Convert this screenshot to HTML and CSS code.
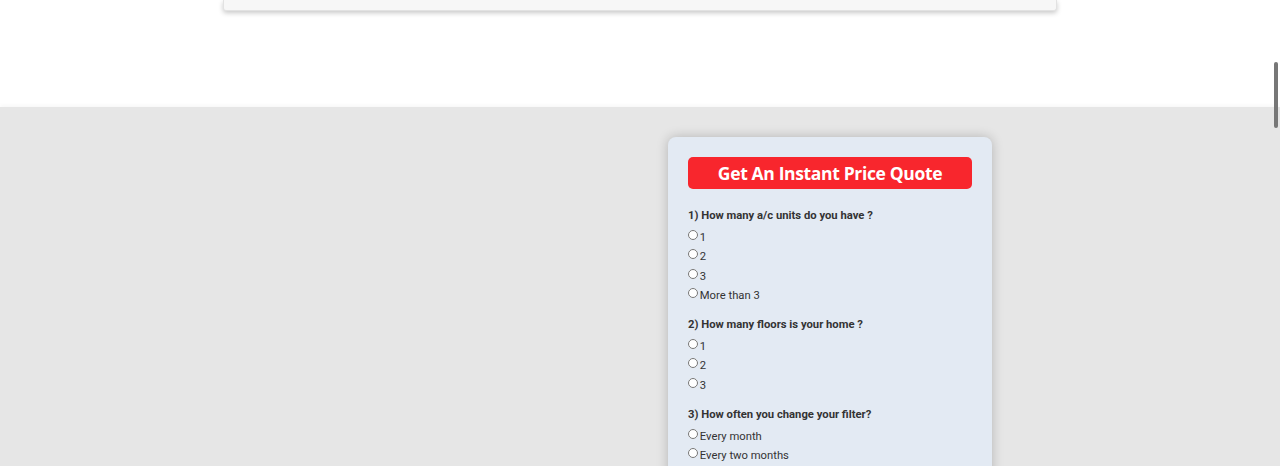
FILE: index.html
```html
<!DOCTYPE html>
<html lang="en">
<head>
    <meta charset="UTF-8">
    <meta name="viewport" content="width=device-width, initial-scale=1.0">
    <title>AC Filter Service - Instant Quote</title>
    <link rel="stylesheet" href="styles.css">
</head>
<body>
    <div class="top-area">
        <div class="top-card"></div>
    </div>

    <div class="quote-section">
        <div class="quote-left"></div>
        <div class="quote-right">
            <form class="quote-card">
                <h2 class="quote-title">Get An Instant Price Quote</h2>

                <div class="question">
                    <p class="question-label">1) How many a/c units do you have ?</p>
                    <label class="option"><input type="radio" name="units"> 1</label>
                    <label class="option"><input type="radio" name="units"> 2</label>
                    <label class="option"><input type="radio" name="units"> 3</label>
                    <label class="option"><input type="radio" name="units"> More than 3</label>
                </div>

                <div class="question">
                    <p class="question-label">2) How many floors is your home ?</p>
                    <label class="option"><input type="radio" name="floors"> 1</label>
                    <label class="option"><input type="radio" name="floors"> 2</label>
                    <label class="option"><input type="radio" name="floors"> 3</label>
                </div>

                <div class="question">
                    <p class="question-label">3) How often you change your filter?</p>
                    <label class="option"><input type="radio" name="filter"> Every month</label>
                    <label class="option"><input type="radio" name="filter"> Every two months</label>
                </div>
            </form>
        </div>
    </div>

    <div class="scroll-thumb"></div>
</body>
</html>
```

FILE: styles.css
```css
body {
    margin: 0;
    font-family: Roboto, "Liberation Sans", Arial, sans-serif;
    background: #ffffff;
    color: #333;
}
.top-area {
    height: 107px;
    display: flex;
    justify-content: center;
}
.top-card {
    width: 832px;
    height: 10px;
    background: #f7f7f7;
    border: 1px solid #e2e2e2;
    border-top: none;
    border-radius: 0 0 3px 3px;
    box-shadow: 0 2px 5px rgba(0,0,0,0.22);
}
.quote-section {
    background: #e6e6e6;
    box-shadow: 0 -2px 4px rgba(0,0,0,0.03);
    display: grid;
    grid-template-columns: 1fr 1fr;
    padding-top: 30px;
    min-height: 400px;
}
.quote-card {
    margin-left: 28px;
    width: 284px;
    padding: 20px;
    background: #e3eaf3;
    border-radius: 8px;
    box-shadow: 0 0 12px rgba(0,0,0,0.22);
}
.quote-title {
    margin: 0 0 18px;
    height: 32px;
    line-height: 32px;
    background: #f8262d;
    border-radius: 5px;
    color: #fff;
    text-align: center;
    font-family: "Open Sans", sans-serif;
    font-size: 17.5px;
    font-weight: 700;
    letter-spacing: -0.35px;
}
.question {
    margin-bottom: 11px;
}
.question-label {
    margin: 0 0 4px;
    padding-top: 1px;
    font-size: 11.25px;
    font-weight: 700;
    line-height: 16px;
}
.option {
    display: block;
    font-size: 11.25px;
    line-height: 19.3px;
}
.option input {
    width: 10px;
    height: 10px;
    margin: 0 -1px 0 0;
    vertical-align: 1px;
}
.scroll-thumb {
    position: fixed;
    top: 62px;
    right: 2px;
    width: 4px;
    height: 66px;
    background: #777;
    border-radius: 2px;
}
```
